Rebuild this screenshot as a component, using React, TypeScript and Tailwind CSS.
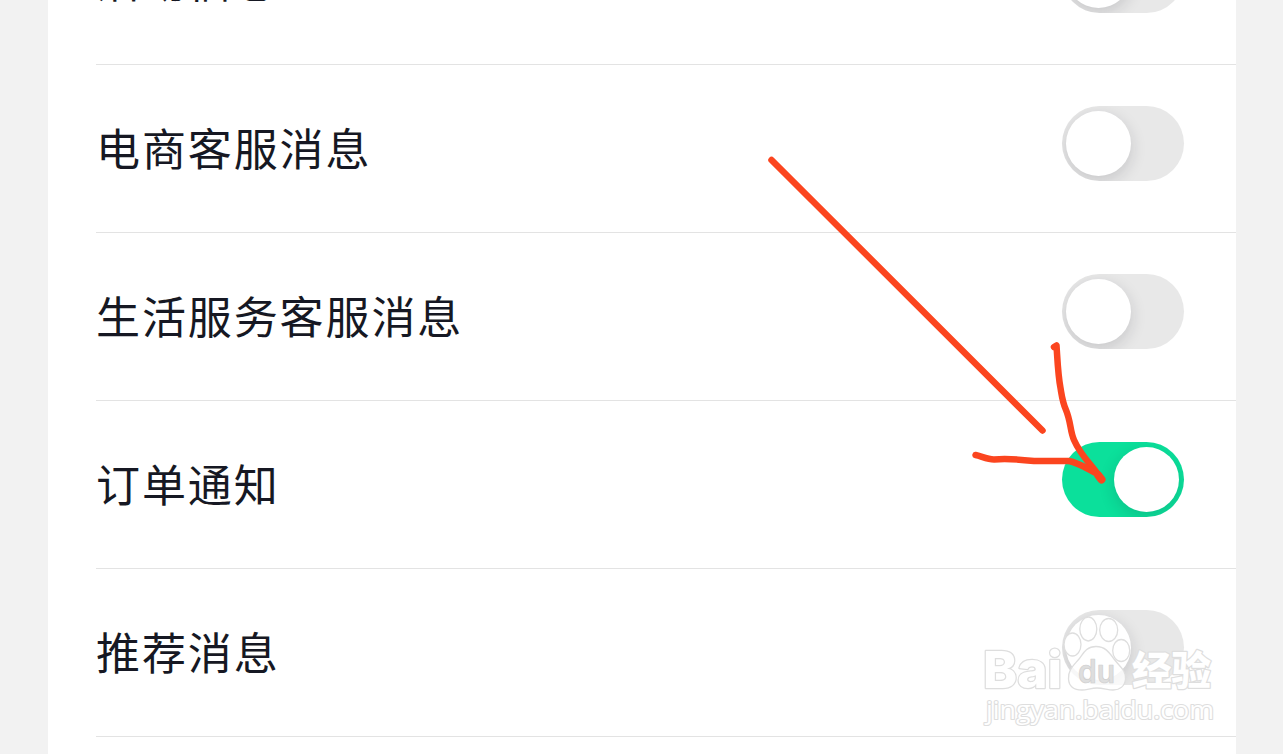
const rows = [
  { label: '活动信息', on: false },
  { label: '电商客服消息', on: false },
  { label: '生活服务客服消息', on: false },
  { label: '订单通知', on: true },
  { label: '推荐消息', on: false },
];

function Toggle({ on }: { on: boolean }) {
  return (
    <div
      role="switch"
      aria-checked={on}
      className={`flex h-[75px] w-[122px] shrink-0 items-center overflow-hidden rounded-full pl-1 pr-[5px] ${on ? 'justify-end bg-[#0be09b]' : 'justify-start bg-[#e8e8e8]'}`}
    >
      <div className="size-[65px] rounded-full bg-white shadow-[0_5px_16px_rgba(22,24,35,0.16)]" />
    </div>
  );
}

function Row({ label, on }: { label: string; on: boolean }) {
  return (
    <div className="ml-12 flex h-[168px] shrink-0 items-start justify-between border-b border-[#e3e3e3] pr-[52px]">
      <span className="mt-[50px] whitespace-nowrap text-[44px] leading-[64px] tracking-[1.9px] text-[#161823]">{label}</span>
      <div className="mt-[41px]">
        <Toggle on={on} />
      </div>
    </div>
  );
}

function Arrow() {
  return (
    <svg className="pointer-events-none absolute inset-0" width="1283" height="754" fill="none" stroke="#fb451f" strokeWidth="6.5" strokeLinecap="round" strokeLinejoin="round">
      <path d="M771.5 160 L1042.5 430.5" />
      <path d="M1054 347 L1056.5 345.5 C1057.5 360 1058 375 1060.5 388 C1062 397 1062.5 402 1066 410 C1071 422 1070 431 1074 440 C1081 456 1091 464 1099 476" />
      <path d="M975.5 455 C981 456 987 459.5 994 459.5 C1004 458.5 1012 458.5 1034 461 L1069 461 C1078 462.5 1088 469 1096 473" />
      <path d="M1098 475 L1101.5 479.5" strokeWidth="8" />
    </svg>
  );
}

function Watermark() {
  return (
    <svg className="pointer-events-none absolute inset-0" width="1283" height="754" fill="#ffffff" stroke="#dedede" strokeWidth="1.3" strokeLinejoin="round">
      <text x="983" y="688" fontSize="51" fontFamily="Inter, sans-serif" fontWeight="800" strokeWidth="2.5" textLength="79" lengthAdjust="spacingAndGlyphs" style={{ paintOrder: 'stroke' }}>Bai</text>
      <ellipse cx="1072.5" cy="644.5" rx="8.5" ry="11.5" />
      <ellipse cx="1088.3" cy="629" rx="8.5" ry="12" />
      <ellipse cx="1108.7" cy="630" rx="9" ry="11.5" />
      <ellipse cx="1121.2" cy="650.5" rx="8.5" ry="11" />
      <path fillOpacity="0.8" d="M1096 646.5 C1086 646.5 1083 654 1079 659 C1073 666 1068 670 1068.5 679 C1069 687 1075 690 1082 690 C1087 690 1091 688 1097 688 C1103 688 1108 690 1113 690 C1120 690 1125 686 1125.5 679 C1126 670 1120 667 1114 659 C1109 652 1105 646.5 1096 646.5 Z" />
      <text x="1078" y="683" fontSize="32" fontWeight="600" fontFamily="Inter, sans-serif" textLength="37" lengthAdjust="spacingAndGlyphs" fill="#dedede" stroke="#cfcfcf" strokeWidth="0.7">du</text>
      <text x="1132" y="685" fontSize="39.5" fontWeight="900" fontFamily="'Noto Sans CJK SC', sans-serif" strokeWidth="2.5" textLength="79" style={{ paintOrder: 'stroke' }}>经验</text>
      <text x="986" y="719" fontSize="25" fontFamily="'Open Sans', sans-serif" strokeWidth="2.2" textLength="228" lengthAdjust="spacingAndGlyphs" style={{ paintOrder: 'stroke' }}>jingyan.baidu.com</text>
    </svg>
  );
}

export default function App() {
  return (
    <div className="relative flex h-[754px] w-[1283px] justify-start overflow-hidden bg-[#f2f2f2] pl-12 font-['Noto_Sans_CJK_SC',sans-serif]">
      <div className="-mt-[103px] flex h-[857px] w-[1188px] flex-col bg-white">
        {rows.map((row) => (
          <Row key={row.label} label={row.label} on={row.on} />
        ))}
      </div>
      <Watermark />
      <Arrow />
    </div>
  );
}
